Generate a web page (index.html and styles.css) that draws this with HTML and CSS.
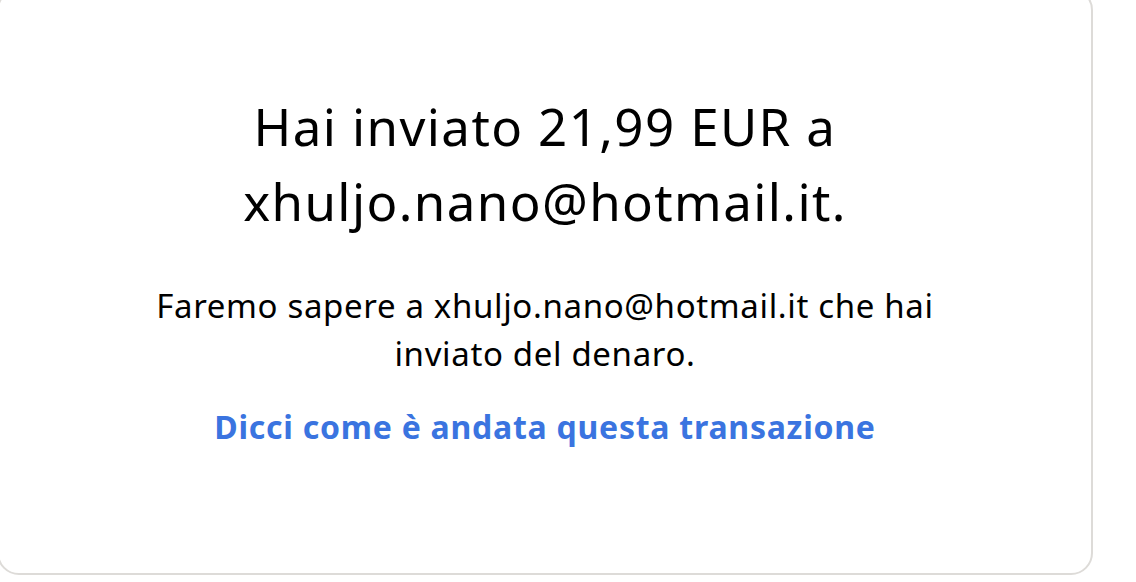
FILE: index.html
```html
<!DOCTYPE html>
<html lang="it">
<head>
<meta charset="utf-8">
<link rel="stylesheet" href="styles.css">
</head>
<body>
<div class="card">
  <div class="content">
    <h1 class="title">Hai inviato 21,99 EUR a<br>xhuljo.nano@hotmail.it.</h1>
    <p class="note">Faremo sapere a xhuljo.nano@hotmail.it che hai<br>inviato del denaro.</p>
    <a class="feedback" href="#">Dicci come è andata questa transazione</a>
  </div>
</div>
</body>
</html>
```

FILE: styles.css
```css
html, body {
  margin: 0;
  padding: 0;
  background: #ffffff;
  overflow: hidden;
}
body {
  font-family: "Noto Sans", "Open Sans", sans-serif;
  color: #000000;
}
.card {
  box-sizing: border-box;
  width: 1096px;
  height: 587px;
  margin-top: -12px;
  margin-left: -3px;
  border: 2px solid #dddbd8;
  border-radius: 22px;
  display: flex;
  justify-content: center;
}
.content {
  display: flex;
  flex-direction: column;
  align-items: center;
  text-align: center;
  padding-top: 99px;
}
.title {
  margin: 0;
  font-size: 51px;
  font-weight: 400;
  line-height: 75px;
  letter-spacing: 1.4px;
}
.note {
  margin: 43px 0 0;
  font-size: 33px;
  line-height: 48px;
  letter-spacing: 0.65px;
}
.feedback {
  margin-top: 25px;
  font-size: 32px;
  font-weight: 700;
  line-height: 48px;
  letter-spacing: 0.75px;
  color: #3a74e0;
  text-decoration: none;
}
```
